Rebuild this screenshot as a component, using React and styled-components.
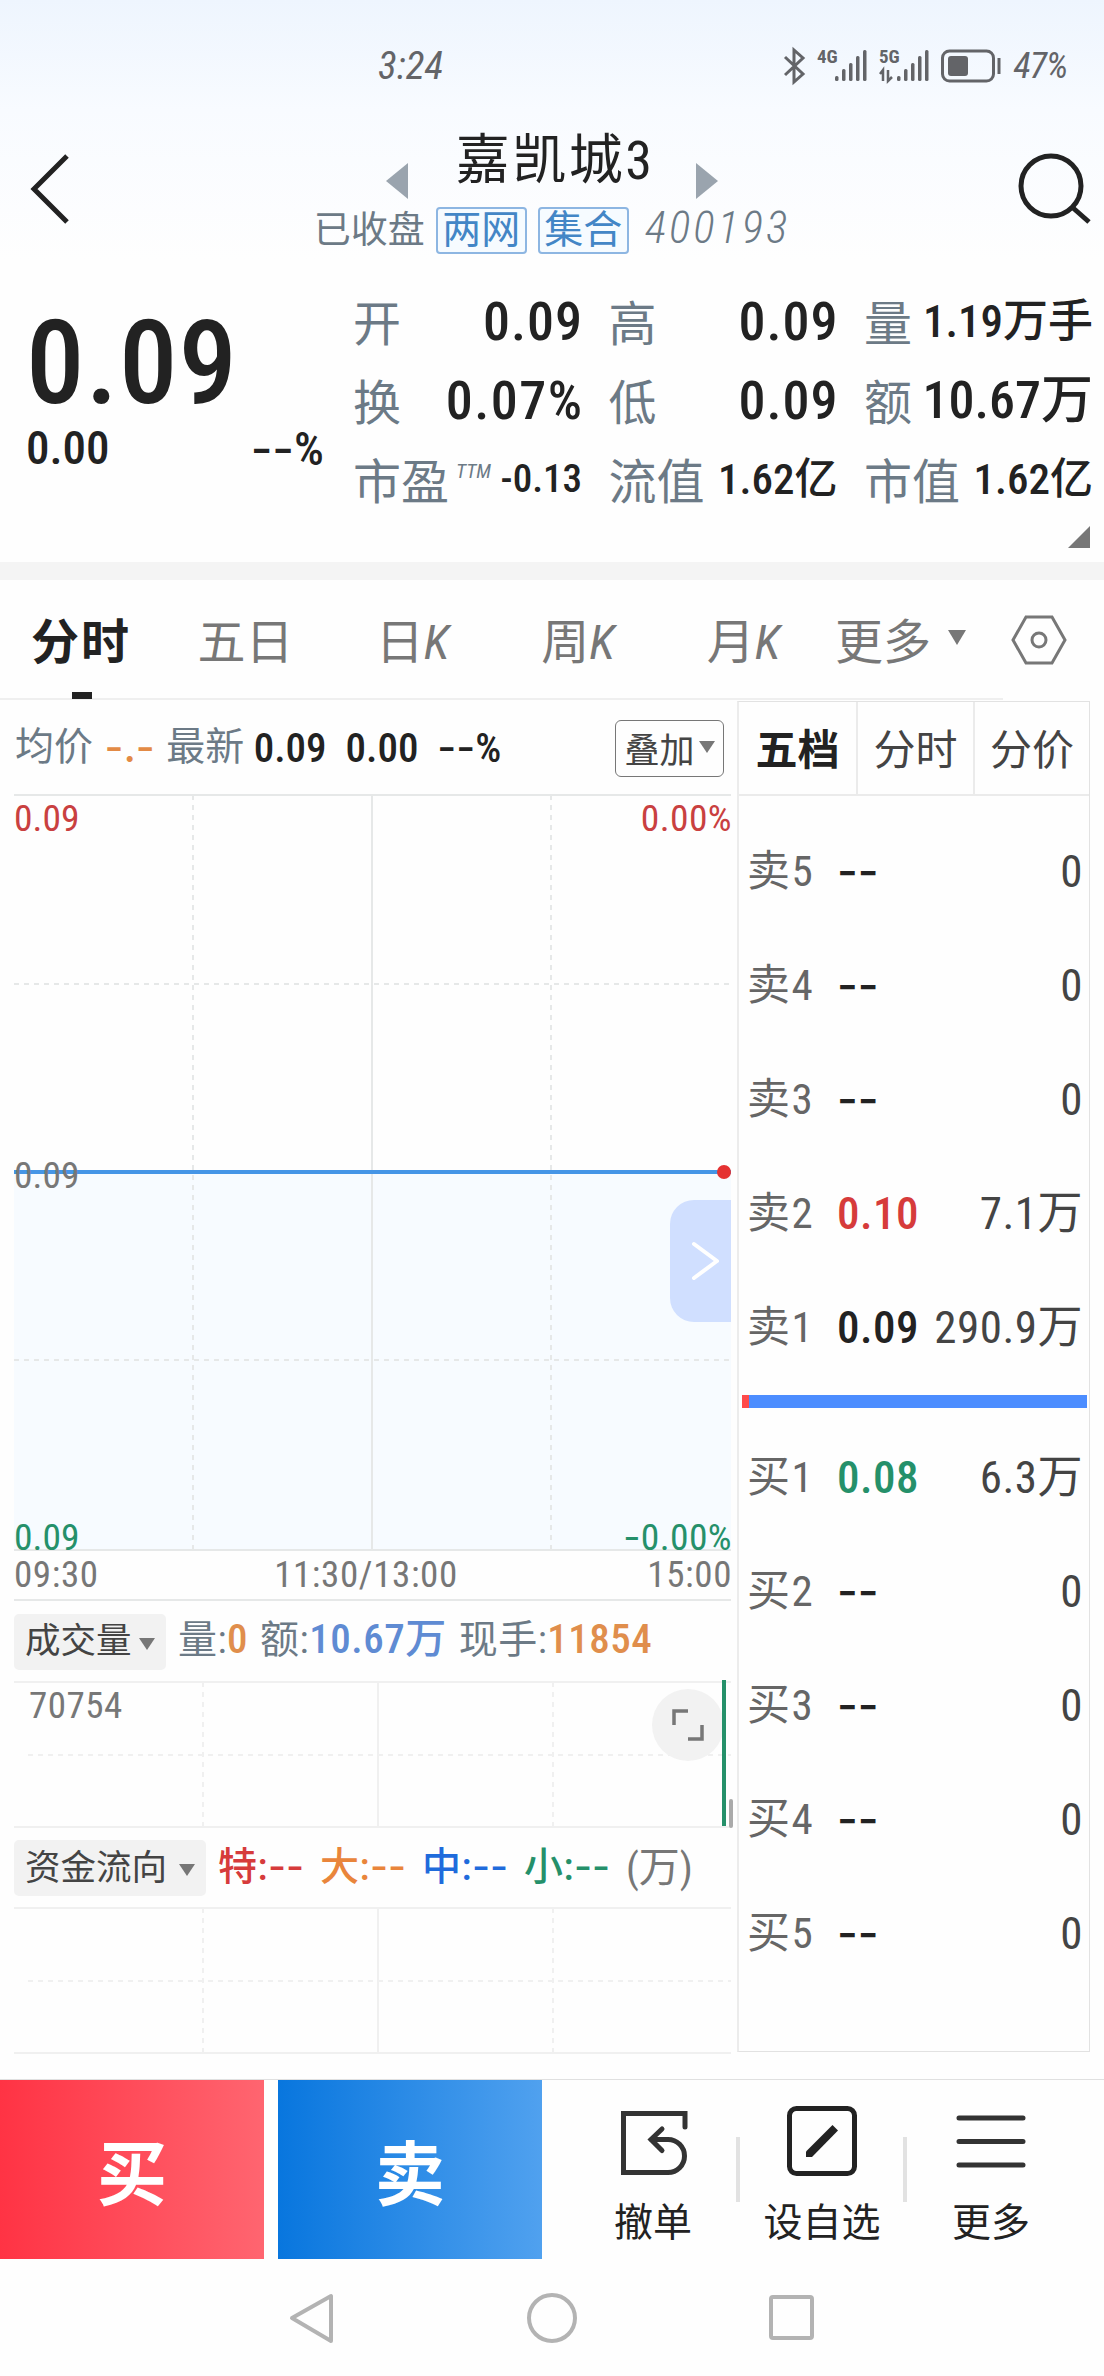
import React from 'react'
import styled, { createGlobalStyle } from 'styled-components'

const GlobalStyle = createGlobalStyle`
  * {
    box-sizing: border-box;
  }

  body {
    margin: 0;
    background: #fefefe;
    color: #222;
    font-family: "Roboto Condensed", Roboto, "Noto Sans CJK SC", sans-serif;
  }

  svg {
    display: block;
    flex: none;
    overflow: visible;
  }
`

const Page = styled.div`
  display: flex;
  flex-direction: column;
  width: 1104px;
  height: 2376px;
  overflow: hidden;
  background: linear-gradient(#eef5fe 0, #f8fbff 110px, #fefefe 260px);
`

const Text = styled.span`
  color: ${p => p.$color || '#222'};
  font-size: ${p => p.$size || 42}px;
  font-weight: ${p => p.$weight || 400};
  font-style: ${p => p.$slant ? 'italic' : 'normal'};
  letter-spacing: ${p => p.$spacing || 0}px;
  line-height: 1;
  white-space: pre;
`

// placeholder dashes are wider than the condensed hyphen
const Dashes = styled.span`
  font-family: Inter, sans-serif;
  letter-spacing: 0;
`

/* status bar */

const StatusBar = styled.div`
  display: flex;
  flex: none;
  align-items: center;
  justify-content: space-between;
  height: 132px;
  padding: 0 37px 0 378px;
`

const StatusIcons = styled.div`
  display: flex;
  align-items: center;
  gap: 12px;
`

/* header */

const Header = styled.header`
  display: grid;
  flex: none;
  grid-template-columns: 120px 1fr 120px;
  height: 140px;
`

const BackButton = styled.div`
  padding: 23px 0 0 29px;
`

const SearchButton = styled.div`
  display: flex;
  justify-content: flex-end;
  padding: 21px 13px 0 0;
`

const HeaderTitle = styled.div`
  display: flex;
  flex-direction: column;
  align-items: center;
`

const TitleRow = styled.div`
  display: flex;
  justify-content: space-between;
  width: 333px;
  height: 54px;

  svg {
    margin-top: 31px;
  }
`

const StockName = styled.h1`
  margin: 0 0 0 6px;
  font-size: 54px;
  font-weight: 400;
  line-height: 58px;
  letter-spacing: 2.5px;
`

const SubRow = styled.div`
  display: flex;
  align-items: center;
  height: 88px;
`

const MarketTag = styled.span`
  width: 91px;
  height: 47px;
  margin-left: 11px;
  border: 2px solid #8db6e2;
  border-radius: 4px;
  background: #f6fbff;
  color: #4386c6;
  font-size: 39px;
  line-height: 43px;
  text-align: center;
`

const StockCode = styled.span`
  margin: 0 0 6px 16px;
  color: #6c7a86;
  font-size: 45px;
  font-style: italic;
  font-weight: 300;
  letter-spacing: 3px;
`

/* quote summary */

const Quote = styled.section`
  display: flex;
  flex: none;
  height: 254px;
`

const Latest = styled.div`
  width: 353px;
  padding: 31px 29px 0 26px;
`

const LatestPrice = styled.div`
  font-size: 117px;
  font-weight: 500;
  line-height: 121px;
  letter-spacing: 1px;
`

const LatestChange = styled.div`
  display: flex;
  justify-content: space-between;
`

const Stats = styled.div`
  display: grid;
  grid-template-columns: repeat(3, 228px);
  grid-auto-rows: 79px;
  column-gap: 27.5px;
  padding-top: 10px;
`

const Stat = styled.div`
  display: flex;
  align-items: center;
  justify-content: space-between;
`

const StatLabel = styled.span`
  display: flex;
  align-items: flex-start;
  padding-top: 6px;
  color: #6c7a86;
  font-size: 48px;
  font-weight: 400;
  line-height: 1;
  white-space: nowrap;

  sup {
    margin: 2px 0 0 7px;
    font-size: 20px;
    font-style: italic;
    line-height: 1;
  }
`

const StatValue = styled.span`
  margin-right: ${p => -(p.$spacing || 0) - 1}px;
  font-size: ${p => p.$size}px;
  font-weight: 500;
  letter-spacing: ${p => p.$spacing || 0}px;
  line-height: 1;
  white-space: nowrap;
`

const ExpandRow = styled.div`
  display: flex;
  flex: none;
  justify-content: flex-end;
  height: 36px;
  padding-right: 14px;
`

const Band = styled.div`
  flex: none;
  height: 18px;
  background: #f4f4f4;
`

/* period tabs */

const PeriodTabs = styled.nav`
  display: grid;
  flex: none;
  grid-template-columns: 162px 167px 167px 164px 167px 147px 130px;
  width: 1104px;
  height: 120px;
  background: linear-gradient(#efefef, #efefef) left bottom / 1003px 2px no-repeat;
`

const PeriodTab = styled.div`
  position: relative;
  display: flex;
  align-items: center;
  justify-content: center;
  gap: 17px;
  padding-bottom: ${p => p.$icon ? 0 : 5}px;
  color: ${p => p.$active ? '#222' : '#777'};
  font-size: 48px;
  font-weight: ${p => p.$active ? 700 : 400};
  letter-spacing: ${p => p.$active ? 2 : 0}px;
  white-space: nowrap;

  &::after {
    content: ${p => p.$active ? '""' : 'none'};
    position: absolute;
    bottom: 1px;
    left: 72px;
    width: 20px;
    height: 7px;
    background: #222;
  }
`

const Caret = styled.span`
  flex: none;
  border: ${p => (p.$size || 16) / 2}px solid transparent;
  border-top: ${p => p.$height || 12}px solid #777;
  border-bottom: 0;
`

/* main area */

const Main = styled.main`
  display: flex;
  flex: none;
  justify-content: space-between;
  height: 1379px;
  padding: 0 14px;
`

const Charts = styled.div`
  display: flex;
  flex-direction: column;
  width: 717px;
`

const InfoRow = styled.div`
  display: flex;
  align-items: center;
  height: 95px;
  padding-left: 1px;
`

const OverlayButton = styled.div`
  display: flex;
  align-items: center;
  justify-content: center;
  gap: 4px;
  width: 109px;
  height: 57px;
  margin: 2px 7px 0 auto;
  padding-bottom: 3px;
  border: 1.5px solid #777;
  border-radius: 6px;
  color: #444;
  font-size: 35px;
`

const ChartBox = styled.div`
  position: relative;
  height: ${p => p.$height}px;
`

const DrawerHandle = styled.div`
  position: absolute;
  top: 405px;
  right: 0;
  display: flex;
  align-items: center;
  justify-content: flex-end;
  width: 61px;
  height: 122px;
  padding-right: 12px;
  border-radius: 24px 0 0 24px;
  background: #d0dfff;
`

const FullscreenButton = styled.div`
  position: absolute;
  top: 7px;
  left: 638px;
  display: flex;
  align-items: center;
  justify-content: center;
  width: 72px;
  height: 72px;
  border-radius: 50%;
  background: #f2f2f2;
`

const VolumeBars = styled.svg`
  position: absolute;
  top: 0;
  left: 0;
`

const LegendRow = styled.div`
  display: flex;
  align-items: center;
  height: ${p => p.$height}px;
`

const IndicatorSelect = styled.div`
  display: flex;
  align-items: center;
  justify-content: space-between;
  width: ${p => p.$width}px;
  height: 56px;
  margin-right: 12px;
  padding: 0 11px 8px 11px;
  border-radius: 5px;
  background: #f2f2f2;
  color: #444;
  font-size: 35.5px;

  span {
    margin-top: 12px;
  }
`

const Legend = styled.span`
  padding-bottom: 4px;
  margin-right: 12px;
  color: #6c7a86;
  font-size: 39px;
  letter-spacing: 0.5px;
  line-height: 1;
  white-space: nowrap;

  b {
    color: ${p => p.$value};
    font-size: 41px;
    font-weight: 500;
  }
`

const FlowLegend = styled(Legend)`
  width: 102px;
  margin: 0;
  color: ${p => p.$color};
  font-weight: 500;
`

/* order book */

const OrderBook = styled.aside`
  width: 353px;
  height: 1351px;
  margin-top: 1px;
  border: 1px solid #e2e2e2;
  border-left: 2px solid #ececec;
`

const BookTabs = styled.div`
  display: grid;
  grid-template-columns: 117px 117px 1fr;
  height: 94px;
  border-bottom: 2px solid #ebebeb;
`

const BookTab = styled.div`
  display: flex;
  align-items: center;
  justify-content: center;
  padding-bottom: 4px;
  border-left: ${p => p.$active ? 0 : 2}px solid #ebebeb;
  color: ${p => p.$active ? '#222' : '#444'};
  font-size: 42px;
  font-weight: ${p => p.$active ? 700 : 400};
`

const BookSide = styled.div`
  padding-top: ${p => p.$offset}px;
`

const BookRow = styled.div`
  display: grid;
  grid-template-columns: 90px 90px 1fr;
  align-items: center;
  height: 114px;
  padding: 0 6px 0 8px;
  line-height: 1;
  font-size: 45px;
`

const Level = styled.span`
  color: #666;
  font-size: 43px;
  letter-spacing: 1.5px;
`

const Price = styled.span`
  color: ${p => p.$color || '#222'};
  font-weight: 500;
  letter-spacing: 0.5px;
`

const Amount = styled.span`
  color: #444;
  letter-spacing: 0.5px;
  text-align: right;
  white-space: nowrap;
`

const Ratio = styled.div`
  display: flex;
  height: 13px;
  margin: 11px 2px 0 3px;
  background: #4c8dff;

  &::before {
    content: '';
    width: 7px;
    background: #ff4b4b;
  }
`

/* bottom */

const ActionBar = styled.footer`
  display: flex;
  flex: none;
  height: 180px;
  border-top: 1px solid #e0e0e0;
`

const TradeButton = styled.div`
  display: flex;
  align-items: center;
  justify-content: center;
  width: 264px;
  margin-right: ${p => p.$gap || 0}px;
  background: linear-gradient(90deg, ${p => p.$from}, ${p => p.$to});
  color: #fff;
  font-size: 70px;
  font-weight: 600;
`

const Tools = styled.div`
  display: grid;
  flex: 1;
  grid-template-columns: 174px 167px 168px;
  padding-left: 24px;
`

const Tool = styled.div`
  display: flex;
  flex-direction: column;
  align-items: center;
  padding: 26px ${p => p.$inset || 0}px 0 0;
  background: ${p => p.$last ? 'none' : 'linear-gradient(#e2e2e2, #e2e2e2) right 57px / 4px 65px no-repeat'};
  font-size: 39px;
  line-height: 40px;

  svg {
    margin-bottom: 27px;
  }
`

const SystemNav = styled.div`
  display: flex;
  flex: 1;
  align-items: center;
  justify-content: space-between;
  padding: 0 290px;
`

const stats = [
  { label: '开', value: '0.09', size: 54, spacing: 1 },
  { label: '高', value: '0.09', size: 54, spacing: 1 },
  { label: '量', value: '1.19万手', size: 45 },
  { label: '换', value: '0.07%', size: 54, spacing: 1.5 },
  { label: '低', value: '0.09', size: 54, spacing: 1 },
  { label: '额', value: '10.67万', size: 52 },
  { label: '市盈', note: 'TTM', value: '-0.13', size: 39 },
  { label: '流值', value: '1.62亿', size: 43 },
  { label: '市值', value: '1.62亿', size: 43 },
]

const flows = [
  { name: '特', color: '#d63b3b' },
  { name: '大', color: '#e9853b' },
  { name: '中', color: '#1f6bdc' },
  { name: '小', color: '#25906a' },
]

const sells = [
  { level: '卖5' },
  { level: '卖4' },
  { level: '卖3' },
  { level: '卖2', price: '0.10', color: '#d63b3b', amount: '7.1万' },
  { level: '卖1', price: '0.09', amount: '290.9万' },
]

const buys = [
  { level: '买1', price: '0.08', color: '#25906a', amount: '6.3万' },
  { level: '买2' },
  { level: '买3' },
  { level: '买4' },
  { level: '买5' },
]

const SignalBars = ({ label, data }) => (
  <svg width="50" height="34" fill="#636468">
    <text x="0" y="14" fontSize="19" fontWeight="700">{label}</text>
    {[5, 12, 18, 25, 31].map((h, i) => (
      <rect key={h} x={18 + i * 7} y={32 - h} width="3.5" height={h} rx="1.5" />
    ))}
    {data && <path d="M1 25L4 21V32M9 21V32L13 28" fill="none" stroke="#636468" strokeWidth="2.5" />}
  </svg>
)

const PriceChart = () => (
  <svg width="717" height="806">
    <rect x="0" y="377" width="717" height="378" fill="#f7fbff" />
    <g stroke="#e6e8e8" strokeWidth="2">
      <path d="M0 0H717M0 755H717M0 805H717M358 0V755" />
      <path d="M179 0V755M537 0V755" strokeDasharray="5 5" />
      <path d="M0 189H717M0 565H717" strokeDasharray="5 5" />
    </g>
    <path d="M0 377H717" stroke="#4595e6" strokeWidth="4" />
    <circle cx="710" cy="377" r="7" fill="#e53232" />
    <g fontSize="37.5">
      <text x="0" y="36" fill="#c94040">0.09</text>
      <text x="718" y="36" fill="#c94040" textAnchor="end" letterSpacing="0.4">0.00%</text>
      <text x="0" y="393" fill="#777">0.09</text>
      <text x="0" y="755" fill="#25906a">0.09</text>
      <text x="718" y="755" fill="#25906a" textAnchor="end" letterSpacing="0.4">
        <tspan fontFamily="Inter">-</tspan>0.00%
      </text>
    </g>
    <g fontSize="37" fill="#777" letterSpacing="0.6">
      <text x="0" y="792">09:30</text>
      <text x="352" y="792" textAnchor="middle">11:30/13:00</text>
      <text x="718" y="792" textAnchor="end">15:00</text>
    </g>
  </svg>
)

const IndicatorGrid = () => (
  <svg width="717" height="146" stroke="#f0f0f0" strokeWidth="2">
    <path d="M0 0H717M0 145H717M364 0V145" />
    <path d="M189 0V145M539 0V145" strokeDasharray="5 5" />
    <path d="M14 73H717" strokeDasharray="5 5" />
  </svg>
)

const BookRows = ({ rows }) => rows.map(({ level, price, color, amount }) => (
  <BookRow key={level}>
    <Level>{level}</Level>
    <Price $color={color}>{price || <Dashes>--</Dashes>}</Price>
    <Amount>{amount || '0'}</Amount>
  </BookRow>
))

export default () => (
  <Page>
    <GlobalStyle />

    <StatusBar>
      <Text $size={39} $color="#636468" $slant>3:24</Text>
      <StatusIcons>
        <svg width="21" height="34" fill="none" stroke="#636468" strokeWidth="3">
          <path d="M1 8l18 17-9 8V1l9 8L1 26" />
        </svg>
        <SignalBars label="4G" />
        <SignalBars label="5G" data />
        <svg width="60" height="34">
          <rect x="1.5" y="2" width="51" height="30" rx="7" fill="none" stroke="#636468" strokeWidth="3" />
          <rect x="7" y="7" width="20" height="20" rx="3" fill="#636468" />
          <path d="M58 9V25" stroke="#636468" strokeWidth="3" />
        </svg>
        <Text $size={36} $color="#636468" $spacing={-1} $slant>47%</Text>
      </StatusIcons>
    </StatusBar>

    <Header>
      <BackButton>
        <svg width="40" height="68" fill="none" stroke="#222" strokeWidth="5">
          <path d="M38 1L5 34l33 33" />
        </svg>
      </BackButton>
      <HeaderTitle>
        <TitleRow>
          <svg width="22" height="36"><path d="M22 0V36L0 18z" fill="#9aa4ae" /></svg>
          <StockName>嘉凯城3</StockName>
          <svg width="22" height="36"><path d="M0 0V36L22 18z" fill="#9aa4ae" /></svg>
        </TitleRow>
        <SubRow>
          <Text $size={37} $color="#6c7a86">已收盘</Text>
          <MarketTag>两网</MarketTag>
          <MarketTag>集合</MarketTag>
          <StockCode>400193</StockCode>
        </SubRow>
      </HeaderTitle>
      <SearchButton>
        <svg width="74" height="70" fill="none" stroke="#222" strokeWidth="5">
          <circle cx="34" cy="33" r="30" />
          <path d="M55 54l17 15" />
        </svg>
      </SearchButton>
    </Header>

    <Quote>
      <Latest>
        <LatestPrice>0.09</LatestPrice>
        <LatestChange>
          <Text $size={47} $weight={500}>0.00</Text>
          <Text $size={47} $weight={500}><Dashes>--</Dashes>%</Text>
        </LatestChange>
      </Latest>
      <Stats>
        {stats.map(({ label, note, value, size, spacing }) => (
          <Stat key={label}>
            <StatLabel>{label}{note && <sup>{note}</sup>}</StatLabel>
            <StatValue $size={size} $spacing={spacing}>{value}</StatValue>
          </Stat>
        ))}
      </Stats>
    </Quote>
    <ExpandRow>
      <svg width="22" height="22"><path d="M22 0V22H0z" fill="#777" /></svg>
    </ExpandRow>
    <Band />

    <PeriodTabs>
      <PeriodTab $active>分时</PeriodTab>
      <PeriodTab>五日</PeriodTab>
      <PeriodTab><span>日<i>K</i></span></PeriodTab>
      <PeriodTab><span>周<i>K</i></span></PeriodTab>
      <PeriodTab><span>月<i>K</i></span></PeriodTab>
      <PeriodTab>更多<Caret $size={18} $height={15} /></PeriodTab>
      <PeriodTab $icon>
        <svg width="56" height="50" fill="none" stroke="#777" strokeWidth="3">
          <path d="M15 2H41L54 25 41 48H15L2 25z" />
          <circle cx="28" cy="25" r="7" />
        </svg>
      </PeriodTab>
    </PeriodTabs>

    <Main>
      <Charts>
        <InfoRow>
          <Text $size={39} $color="#6c7a86">均价</Text>
          <Text $size={41} $weight={500} $color="#e38a45" $spacing={2}>{' '}<Dashes>-.-</Dashes>{' '}</Text>
          <Text $size={39} $color="#6c7a86">最新</Text>
          <Text $size={41} $weight={500}>{' 0.09  0.00  '}<Dashes>--</Dashes>%</Text>
          <OverlayButton>叠加<Caret $size={17} /></OverlayButton>
        </InfoRow>

        <ChartBox $height={806}>
          <PriceChart />
          <DrawerHandle>
            <svg width="27" height="38" fill="none" stroke="#fff" strokeWidth="4" strokeLinecap="round" strokeLinejoin="round">
              <path d="M2 2l23 17L2 36" />
            </svg>
          </DrawerHandle>
        </ChartBox>

        <LegendRow $height={81}>
          <IndicatorSelect $width={152}>成交量<Caret /></IndicatorSelect>
          <Legend $value="#e08e4c">量:<b>0</b></Legend>
          <Legend $value="#5f8bd3">额:<b>10.67万</b></Legend>
          <Legend $value="#e08e4c">现手:<b>11854</b></Legend>
        </LegendRow>
        <ChartBox $height={146}>
          <IndicatorGrid />
          <FullscreenButton>
            <svg width="32" height="32" fill="none" stroke="#777" strokeWidth="3.5">
              <path d="M2 16V2H16M30 16V30H16" />
            </svg>
          </FullscreenButton>
          <VolumeBars width="720" height="146">
            <text x="15" y="36" fontSize="37" letterSpacing="0.5" fill="#777">70754</text>
            <rect x="708" y="-2" width="4" height="146" fill="#25906a" />
            <rect x="715" y="117" width="4" height="29" rx="2" fill="#aaa" />
          </VolumeBars>
        </ChartBox>

        <LegendRow $height={80}>
          <IndicatorSelect $width={192}>资金流向<Caret /></IndicatorSelect>
          {flows.map(({ name, color }) => (
            <FlowLegend key={name} $color={color}>{name}:<Dashes>--</Dashes></FlowLegend>
          ))}
          <Text $size={41} $color="#777">(万)</Text>
        </LegendRow>
        <ChartBox $height={146}>
          <IndicatorGrid />
        </ChartBox>
      </Charts>

      <OrderBook>
        <BookTabs>
          <BookTab $active>五档</BookTab>
          <BookTab>分时</BookTab>
          <BookTab>分价</BookTab>
        </BookTabs>
        <BookSide $offset={18}>
          <BookRows rows={sells} />
        </BookSide>
        <Ratio />
        <BookSide $offset={12}>
          <BookRows rows={buys} />
        </BookSide>
      </OrderBook>
    </Main>

    <ActionBar>
      <TradeButton $gap={14} $from="#ff3344" $to="#ff6570">买</TradeButton>
      <TradeButton $from="#0876de" $to="#50a1ef">卖</TradeButton>
      <Tools>
        <Tool>
          <svg width="66" height="70" fill="none" stroke="#333" strokeWidth="5" strokeLinecap="round">
            <path d="M65 21V7.5H3.5V66.500H48A16.500 16.500 0 0 0 48 33.500H31M42 23L31 33.500L42 44.500" />
          </svg>
          撤单
        </Tool>
        <Tool $inset={3}>
          <svg width="70" height="70">
            <rect x="2.5" y="2.5" width="65" height="65" rx="7" fill="none" stroke="#222" strokeWidth="5" />
            <path d="M19 51V45.500L45.500 19L51 24.500L25 51z" fill="#222" />
          </svg>
          设自选
        </Tool>
        <Tool $last>
          <svg width="70" height="70" fill="none" stroke="#333" strokeWidth="5" strokeLinecap="round">
            <path d="M3 12H67M3 35.500H67M3 59H67" />
          </svg>
          更多
        </Tool>
      </Tools>
    </ActionBar>

    <SystemNav>
      <svg width="44" height="50" fill="none" stroke="#b3b3b3" strokeWidth="4" strokeLinejoin="round">
        <path d="M41 3V48L2 25z" />
      </svg>
      <svg width="50" height="50" fill="none" stroke="#b3b3b3" strokeWidth="4">
        <circle cx="25" cy="25" r="23" />
      </svg>
      <svg width="45" height="46" fill="none" stroke="#b3b3b3" strokeWidth="4">
        <rect x="2" y="2" width="41" height="41" rx="2" />
      </svg>
    </SystemNav>
  </Page>
)
